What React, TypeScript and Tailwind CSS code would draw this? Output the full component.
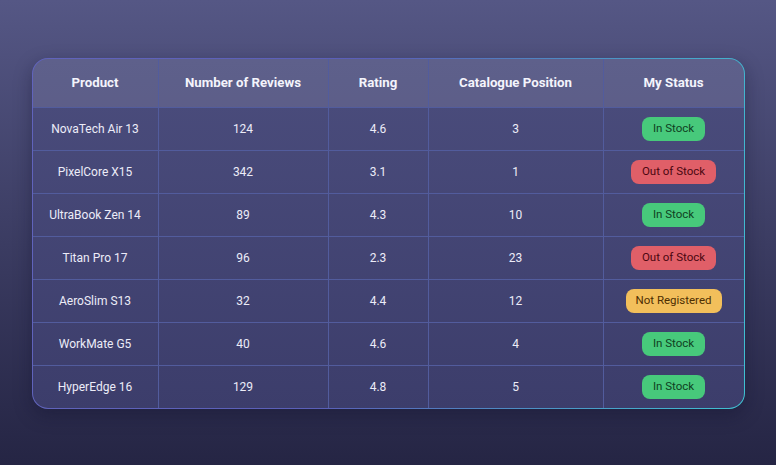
type Status = "in" | "out" | "none";

interface Row {
  product: string;
  reviews: number;
  rating: string;
  position: number;
  status: Status;
}

const rows: Row[] = [
  { product: "NovaTech Air 13", reviews: 124, rating: "4.6", position: 3, status: "in" },
  { product: "PixelCore X15", reviews: 342, rating: "3.1", position: 1, status: "out" },
  { product: "UltraBook Zen 14", reviews: 89, rating: "4.3", position: 10, status: "in" },
  { product: "Titan Pro 17", reviews: 96, rating: "2.3", position: 23, status: "out" },
  { product: "AeroSlim S13", reviews: 32, rating: "4.4", position: 12, status: "none" },
  { product: "WorkMate G5", reviews: 40, rating: "4.6", position: 4, status: "in" },
  { product: "HyperEdge 16", reviews: 129, rating: "4.8", position: 5, status: "in" },
];

const headers = ["Product", "Number of Reviews", "Rating", "Catalogue Position", "My Status"];

function StatusBadge({ status }: { status: Status }) {
  if (status === "in") {
    return (
      <span className="inline-flex h-6 items-center rounded-lg bg-[#47c97b] px-[11px] text-[11.5px] text-[#0f3f22]">
        In Stock
      </span>
    );
  }
  if (status === "out") {
    return (
      <span className="inline-flex h-6 items-center rounded-lg bg-[#e05f68] px-[10.5px] text-[11.5px] text-[#4a0710]">
        Out of Stock
      </span>
    );
  }
  return (
    <span className="inline-flex h-6 items-center rounded-lg bg-[#f2bf5b] px-[10px] text-[11.5px] text-[#4d2e02]">
      Not Registered
    </span>
  );
}

const cell = "flex items-center justify-center border-r border-[#525c9d] last:border-r-0";

export default function App() {
  return (
    <div
      className="flex h-[465px] w-[776px] items-start justify-center bg-gradient-to-b from-[#555785] to-[#252544] pt-[58px]"
      style={{ fontFamily: "Roboto, 'Liberation Sans', sans-serif" }}
    >
      <div className="w-[713px] overflow-hidden rounded-2xl border border-transparent shadow-[0_6px_18px_rgba(15,15,40,0.35)] [background:linear-gradient(180deg,#4b4d7d,#3c3d6b)_padding-box,linear-gradient(100deg,#6164bc_0%,#5a5fb8_45%,#3fc2d2_100%)_border-box]">
        <div className="grid h-12 grid-cols-[126px_170px_100px_175px_1fr] bg-[#ffffff1c] text-[13.25px] font-bold text-[#f4f4fc]">
          {headers.map((h) => (
            <div key={h} className={cell}>
              {h}
            </div>
          ))}
        </div>
        {rows.map((r) => (
          <div
            key={r.product}
            className="grid h-[43px] grid-cols-[126px_170px_100px_175px_1fr] border-t border-[#525c9d] text-[12px] text-[#ececf8]"
          >
            <div className={cell}>{r.product}</div>
            <div className={cell}>{r.reviews}</div>
            <div className={cell}>{r.rating}</div>
            <div className={cell}>{r.position}</div>
            <div className={cell}>
              <StatusBadge status={r.status} />
            </div>
          </div>
        ))}
      </div>
    </div>
  );
}
